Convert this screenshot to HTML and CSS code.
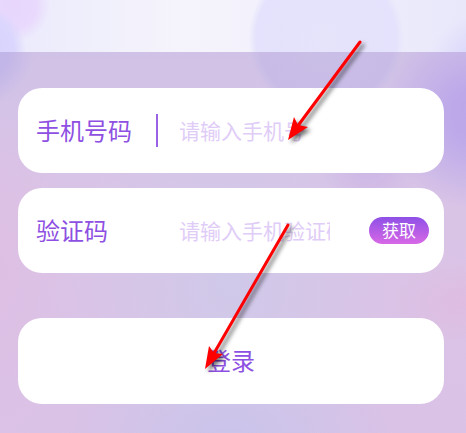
FILE: index.html
```html
<!DOCTYPE html>
<html lang="zh-CN">

<head>
    <meta charset="UTF-8">
    <meta name="viewport" content="width=device-width, initial-scale=1.0">
    <title>登录</title>
    <link rel="stylesheet" href="styles.css">
</head>

<body>
    <div class="banner"></div>

    <form class="login-panel">
        <div class="field">
            <label class="field-label" for="phone">手机号码</label>
            <span class="divider"></span>
            <input class="field-input" type="tel" id="phone" placeholder="请输入手机号">
        </div>

        <div class="field">
            <label class="field-label" for="code">验证码</label>
            <span class="divider divider-hidden"></span>
            <input class="field-input" type="text" id="code" placeholder="请输入手机验证码">
            <button type="button" class="get-code">获取</button>
        </div>

        <button type="submit" class="login-btn">登录</button>
    </form>

    <!-- arrows pointing at the phone field and the login button -->
    <svg class="arrows" width="466" height="433" viewBox="0 0 466 433" aria-hidden="true">
        <g>
            <path class="arrow-line" d="M360 42 L297 127" />
            <path class="arrow-head" d="M288 140 L294 117 L298 125 L308 127 Z" />
        </g>
        <g>
            <path class="arrow-line" d="M288 225 L213 355" />
            <path class="arrow-head" d="M205 369 L209 346 L214 353 L223 354 Z" />
        </g>
    </svg>
</body>

</html>
```

FILE: styles.css
```css
* {
    box-sizing: border-box;
}

body {
    margin: 0;
    min-height: 100vh;
    display: flex;
    flex-direction: column;
    position: relative;
    font-family: "Noto Sans CJK SC", sans-serif;
    color: #8e50e2;
}

.banner {
    height: 52px;
    background:
        radial-gradient(circle at -20px 50px, #d6d2fc 0, #dad6fd 34px, transparent 46px),
        radial-gradient(circle at 14px 6px, #e8d6fd 0, #e9d9fd 22px, transparent 36px),
        radial-gradient(circle at 326px 38px, #e6e4fb 0, #e4e2fc 70px, transparent 78px),
        radial-gradient(circle at 490px 74px, #cfccfa 0, transparent 64px),
        linear-gradient(90deg, #ebe9fc 0%, #f0f0fc 22%, #f5f3fb 38%, #f3f2fc 55%, #e9e8fb 100%);
}

.login-panel {
    flex: 1;
    display: flex;
    flex-direction: column;
    padding: 36px 22px 29px 18px;
    background:
        radial-gradient(circle at -20px 0, #bfb5e8 0, #c2b6e8 28px, transparent 54px),
        radial-gradient(circle at 326px -14px, #cabfe6 0, #c8bce7 68px, transparent 78px),
        radial-gradient(circle at 476px 62px, #bba7ea 0, #beaae9 30px, transparent 96px),
        radial-gradient(circle at 370px 110px, #cbb4e6 0, transparent 50px),
        radial-gradient(ellipse at 470px 250px, #dfbce1 0, transparent 80px),
        radial-gradient(ellipse 70px 180px at 0 220px, #debfe4 0, transparent 100%),
        radial-gradient(ellipse 170px 110px at 230px 390px, #cac4eb 0, transparent 100%),
        radial-gradient(ellipse 160px 200px at 230px 230px, #d0c9e9 0, transparent 100%),
        linear-gradient(180deg, #d0c2e6 0%, #d5c4e7 22%, #dac4e6 40%, #dac2e6 100%);
}

.field {
    display: flex;
    align-items: center;
    height: 85px;
    margin-bottom: 15px;
    padding: 0 15px 0 18px;
    background-color: #fff;
    border-radius: 24px;
}

.field-label {
    width: 120px;
    padding-bottom: 2px;
    font-size: 24px;
    line-height: 36px;
}

.divider {
    width: 2px;
    height: 33px;
    margin-right: 21px;
    background-color: #9a62e4;
}

.divider-hidden {
    visibility: hidden;
}

.field-input {
    width: 151px;
    height: 36px;
    padding: 0 0 2px;
    border: none;
    outline: none;
    background: transparent;
    font-family: inherit;
    font-size: 21px;
    color: #8e50e2;
}

.field-input::placeholder {
    color: #dfcdf7;
    opacity: 1;
}

.get-code {
    width: 60px;
    height: 27px;
    margin-left: auto;
    padding: 0 0 2px;
    border: none;
    border-radius: 14px;
    background: linear-gradient(180deg, #8e50e6, #d868e6);
    font-family: inherit;
    font-size: 17px;
    line-height: 25px;
    color: #fff;
    cursor: pointer;
}

.login-btn {
    height: 86px;
    margin-top: 30px;
    padding: 0 0 4px;
    border: none;
    border-radius: 24px;
    background-color: #fff;
    font-family: inherit;
    font-size: 24px;
    color: #8e50e2;
    cursor: pointer;
}

.arrows {
    position: absolute;
    top: 0;
    left: 0;
    pointer-events: none;
}

.arrows g {
    filter: drop-shadow(3px 3px 2px rgba(0, 0, 0, 0.55));
}

.arrow-line {
    fill: none;
    stroke: #f00;
    stroke-width: 3;
    stroke-linecap: round;
}

.arrow-head {
    fill: #f00;
}
```
